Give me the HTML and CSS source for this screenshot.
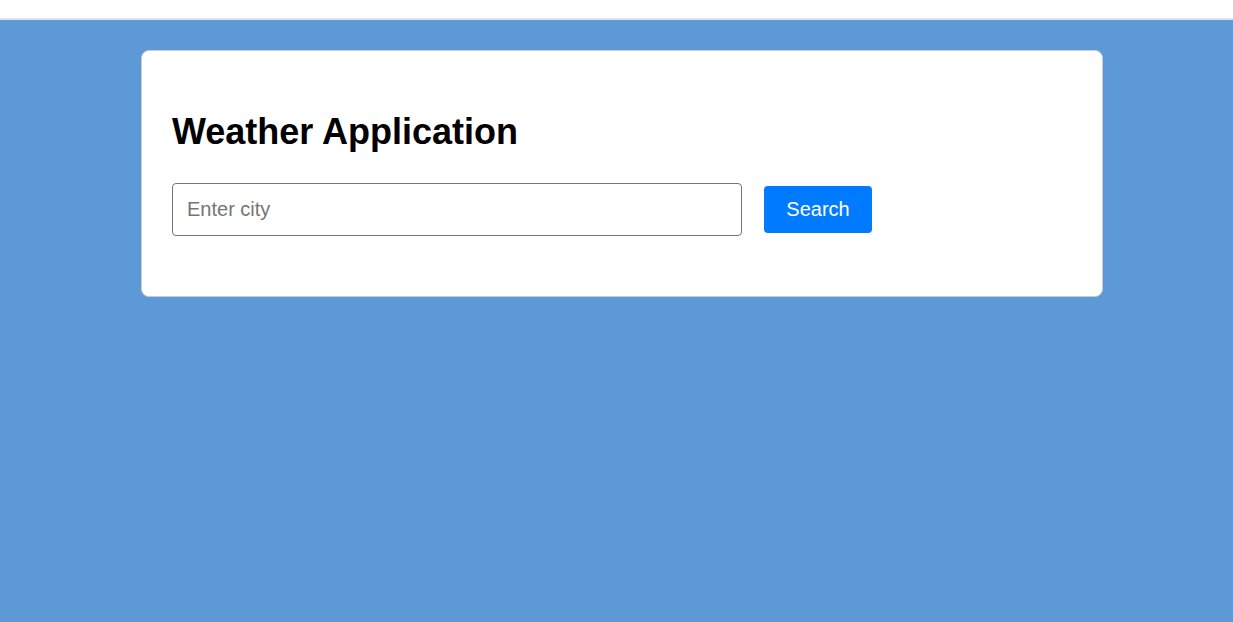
FILE: index.html
```html
<!DOCTYPE html>
<html lang="en">
<head>
<meta charset="utf-8">
<meta name="viewport" content="width=device-width, initial-scale=1">
<title>Weather Application</title>
<link rel="stylesheet" href="styles.css">
</head>
<body>
<header class="topbar"></header>
<div class="page">
  <main class="card">
    <h1 class="title">Weather Application</h1>
    <form class="search">
      <input class="city" type="text" placeholder="Enter city" aria-label="City">
      <button class="submit" type="button">Search</button>
    </form>
  </main>
</div>
</body>
</html>
```

FILE: styles.css
```css
* {
  box-sizing: border-box;
}

body {
  margin: 0;
  min-height: 100vh;
  background: #5d99d7;
  font-family: "Liberation Sans", Arial, sans-serif;
}

.topbar {
  height: 20px;
  background: #fff;
  border-bottom: 2px solid #dfe2e3;
}

.page {
  padding: 30px 0 30px 11px;
}

.card {
  max-width: 962px;
  margin: 0 auto;
  padding: 60px 30px;
  background: #fff;
  border: 1px solid #ccc;
  border-radius: 8px;
}

.title {
  margin: 0 0 30px;
  font-size: 36px;
  line-height: 42px;
  font-weight: bold;
  color: #000;
}

.search {
  display: flex;
  align-items: center;
  gap: 22px;
}

.city {
  flex: 0 1 570px;
  min-width: 0;
  height: 53px;
  padding: 0 14px;
  border: 1px solid #767676;
  border-radius: 4px;
  font: inherit;
  font-size: 20px;
}

.city::placeholder {
  color: #757575;
}

.submit {
  min-width: 108px;
  height: 47px;
  padding: 0 22px;
  border: 0;
  border-radius: 4px;
  background: #007bff;
  color: #fff;
  font: inherit;
  font-size: 20px;
  cursor: pointer;
}
```
